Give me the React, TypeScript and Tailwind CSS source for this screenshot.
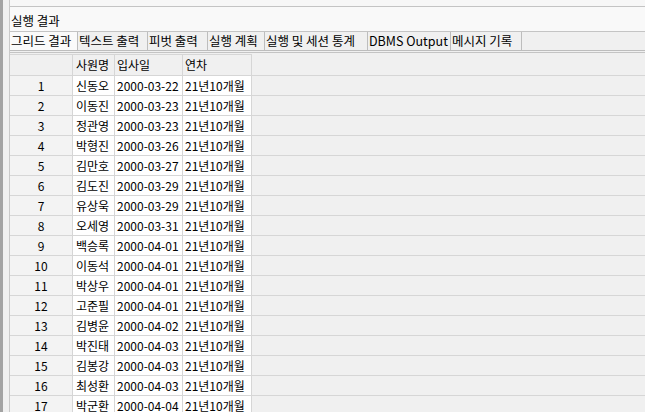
import React from 'react';

const rows: [string, string, string][] = [
  ['신동오', '2000-03-22', '21년10개월'],
  ['이동진', '2000-03-23', '21년10개월'],
  ['정관영', '2000-03-23', '21년10개월'],
  ['박형진', '2000-03-26', '21년10개월'],
  ['김만호', '2000-03-27', '21년10개월'],
  ['김도진', '2000-03-29', '21년10개월'],
  ['유상욱', '2000-03-29', '21년10개월'],
  ['오세영', '2000-03-31', '21년10개월'],
  ['백승록', '2000-04-01', '21년10개월'],
  ['이동석', '2000-04-01', '21년10개월'],
  ['박상우', '2000-04-01', '21년10개월'],
  ['고준필', '2000-04-01', '21년10개월'],
  ['김병윤', '2000-04-02', '21년10개월'],
  ['박진태', '2000-04-03', '21년10개월'],
  ['김봉강', '2000-04-03', '21년10개월'],
  ['최성환', '2000-04-03', '21년10개월'],
  ['박군환', '2000-04-04', '21년10개월'],
];

const tabs: { label: string; w: string }[] = [
  { label: '그리드 결과', w: 'w-[68px]' },
  { label: '텍스트 출력', w: 'w-[70px]' },
  { label: '피벗 출력', w: 'w-[60px]' },
  { label: '실행 계획', w: 'w-[57px]' },
  { label: '실행 및 세션 통계', w: 'w-[103px]' },
  { label: 'DBMS Output', w: 'w-[83px]' },
  { label: '메시지 기록', w: 'w-[71px]' },
];

export default function App() {
  return (
    <div
      className="w-[645px] h-[412px] overflow-hidden flex bg-[#f0f0f0] text-[12px] text-black leading-none"
      style={{ fontFamily: '"Noto Sans CJK KR", "Noto Sans", sans-serif' }}
    >
      {/* left frame */}
      <div className="w-[3px] shrink-0 bg-[#a3a3a3]" />
      <div className="w-[6px] shrink-0 bg-[#f0f0f0]" />

      <div className="flex-1 flex flex-col border-l border-[#c9c9c9] min-w-0">
        <div className="h-[7px] shrink-0 bg-[#f7f7f7] border-b border-[#c4c4c4]" />
        <div className="h-[25px] shrink-0 flex items-center pt-[4px] pl-[1px] text-[12.5px] bg-[#f9f9f9] border-b border-[#c4c4c4]">
          실행 결과
        </div>

        {/* tabs */}
        <div className="h-[19px] shrink-0 flex border-b border-[#bdbdbd] text-[12.5px]">
          {tabs.map((t, i) => (
            <div
              key={t.label}
              className={`${t.w} shrink-0 flex items-center pl-[1px] pt-[1px] border-r border-[#bdbdbd] whitespace-nowrap ${
                i === 0 ? 'bg-[#fafafa]' : 'bg-[#f0f0f0]'
              }`}
            >
              {t.label}
            </div>
          ))}
        </div>

        {/* grid */}
        <div className="mt-[1px] border-t border-[#c4c4c4] flex-1 pt-[1px]">
          <div className="flex h-[22px] border-b border-[#d6d6d6]">
            <div className="w-[63px] shrink-0 bg-[#f0f0f0] border-r border-[#d6d6d6] border-t" />
            <div className="w-[42px] shrink-0 bg-[#f0f0f0] border-r border-t border-[#d6d6d6] flex items-center px-[3px]">사원명</div>
            <div className="w-[68px] shrink-0 bg-[#f0f0f0] border-r border-t border-[#d6d6d6] flex items-center px-[2px]">입사일</div>
            <div className="w-[69px] shrink-0 bg-[#f0f0f0] border-r border-t border-[#d6d6d6] flex items-center px-[2px]">연차</div>
          </div>
          {rows.map((r, i) => (
            <div key={i} className="flex h-[20px] border-b border-[#d6d6d6]">
              <div className="w-[63px] shrink-0 bg-[#f3f3f3] border-r border-[#d6d6d6] flex items-center justify-center">
                {i + 1}
              </div>
              <div className="w-[42px] shrink-0 bg-white border-r border-[#d6d6d6] flex items-center px-[3px] whitespace-nowrap">{r[0]}</div>
              <div className="w-[68px] shrink-0 bg-white border-r border-[#d6d6d6] flex items-center px-[2px] whitespace-nowrap">{r[1]}</div>
              <div className="w-[69px] shrink-0 bg-white border-r border-[#d6d6d6] flex items-center px-[2px] whitespace-nowrap">{r[2]}</div>
            </div>
          ))}
        </div>
      </div>
    </div>
  );
}
